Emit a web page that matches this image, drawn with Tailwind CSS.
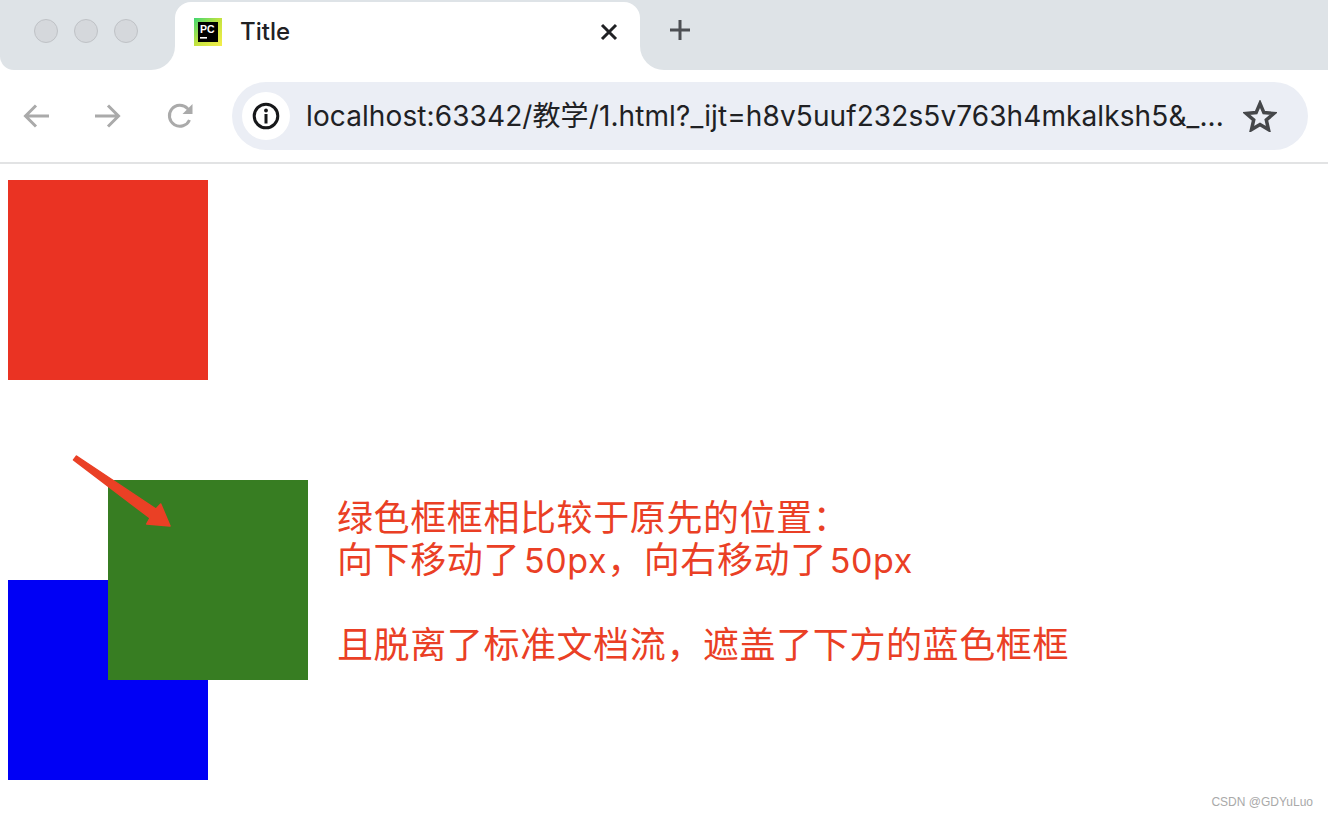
<!DOCTYPE html>
<html lang="zh-CN">
<head>
    <meta charset="UTF-8">
    <title>Title</title>
    <script src="https://cdn.jsdelivr.net/npm/@tailwindcss/browser@4"></script>
</head>
<body class="bg-white h-[816px] overflow-hidden relative font-['Inter','Noto_Sans_CJK_SC',sans-serif]">

    <!-- Tab strip -->
    <header class="flex h-[70px] bg-white">
        <div class="w-[175px] bg-[#dee3e7] rounded-br-[24px] rounded-bl-[14px] flex items-center gap-[16px] pl-[34px] pb-[8px]">
            <span class="w-[24px] h-[24px] rounded-full bg-[#d5d8dc] border border-[#bfc2c6]"></span>
            <span class="w-[24px] h-[24px] rounded-full bg-[#d5d8dc] border border-[#bfc2c6]"></span>
            <span class="w-[24px] h-[24px] rounded-full bg-[#d5d8dc] border border-[#bfc2c6]"></span>
        </div>
        <div class="w-[465px] bg-[#dee3e7] pt-[2px]">
            <div class="h-full bg-white rounded-t-[16px] flex items-center pl-[19px] pr-[22px] pb-[8px]">
                <svg width="28" height="28" viewBox="0 0 28 28" class="shrink-0">
                    <defs>
                        <linearGradient id="pc-frame" x1="0" y1="0" x2="1" y2="1">
                            <stop offset="0" stop-color="#3fd672"/>
                            <stop offset="0.5" stop-color="#c4e33f"/>
                            <stop offset="1" stop-color="#f5ee4a"/>
                        </linearGradient>
                    </defs>
                    <rect width="28" height="28" fill="url(#pc-frame)"/>
                    <rect x="4" y="4" width="20" height="20" fill="#000"/>
                    <text x="6" y="14.5" font-family="Liberation Sans" font-size="10.5" font-weight="700" fill="#fff">PC</text>
                    <rect x="6" y="19" width="7" height="1.6" fill="#fff"/>
                </svg>
                <span class="ml-[18px] text-[24px] font-medium text-[#202124]">Title</span>
                <svg width="18" height="18" viewBox="0 0 18 18" class="ml-auto" fill="none" stroke="#202124" stroke-width="3">
                    <path d="M2 2L16 16M16 2L2 16"/>
                </svg>
            </div>
        </div>
        <div class="flex-1 bg-[#dee3e7] rounded-bl-[24px] flex items-center pl-[30px] pb-[10px]">
            <svg width="20" height="20" viewBox="0 0 20 20" stroke="#4d5054" stroke-width="3" fill="none">
                <path d="M10 0V20M0 10H20"/>
            </svg>
        </div>
    </header>

    <!-- Toolbar -->
    <nav class="h-[94px] border-b-2 border-[#e2e3e4] flex items-center pl-[23px] pr-[20px]">
        <svg width="26" height="24" viewBox="0 0 26 24" fill="none" stroke="#aaaaaa" stroke-width="3">
            <path d="M26 12H2M13 1.500L2.500 12L13 22.500"/>
        </svg>
        <svg width="26" height="24" viewBox="0 0 26 24" fill="none" stroke="#aaaaaa" stroke-width="3" class="ml-[46px]">
            <path d="M0 12H24M13 1.500L23.500 12L13 22.500"/>
        </svg>
        <svg width="26" height="26" viewBox="0 0 26 26" fill="none" class="ml-[46px]">
            <path d="M22.500 17A10.500 10.500 0 1 1 20.500 5.500L24 9" stroke="#aaaaaa" stroke-width="3"/>
            <path d="M25.500 1V11H15.500Z" fill="#aaaaaa"/>
        </svg>
        <div class="ml-[39px] flex-1 h-[68px] rounded-full bg-[#ebeef5] flex items-center pl-[10px] pr-[31px]">
            <span class="w-[48px] h-[48px] rounded-full bg-white flex items-center justify-center shrink-0">
                <svg width="28" height="28" viewBox="0 0 28 28" fill="none">
                    <circle cx="14" cy="14" r="11.800" stroke="#17181a" stroke-width="3"/>
                    <circle cx="14" cy="8.500" r="1.900" fill="#17181a"/>
                    <rect x="12.500" y="12" width="3" height="9.500" fill="#17181a"/>
                </svg>
            </span>
            <span class="ml-[16px] text-[28px] tracking-[0.1px] text-[#202124] whitespace-nowrap">localhost:63342/教学/1.html?_ijt=h8v5uuf232s5v763h4mkalksh5&amp;_...</span>
            <svg width="34" height="32" viewBox="0 0 34 32" fill="none" stroke="#45474a" stroke-width="3.500" class="ml-auto shrink-0">
                <path d="M17 3.500L20.900 12.600L30.800 13.500L23.300 20L25.500 29.600L17 24.500L8.500 29.600L10.700 20L3.200 13.500L13.100 12.600Z"/>
            </svg>
        </div>
    </nav>

    <!-- Page content -->
    <main class="relative pl-[8px] pt-[16px]">
        <div class="w-[200px] h-[200px] bg-[#ea3323]"></div>
        <div class="w-[200px] h-[200px] mt-[200px] bg-[#0000f5]"></div>
        <div class="absolute left-[108px] top-[316px] w-[200px] h-[200px] bg-[#377d22]"></div>

        <svg class="absolute left-[70px] top-[288px]" width="106" height="78" viewBox="0 0 106 78">
            <path d="M6.500 4L86 57L90.700 52L100 74L76.700 72L80 66L3.500 8Z" fill="#ea4025" stroke="#ea4025" stroke-width="1.500" stroke-linejoin="round"/>
        </svg>

        <div class="absolute left-[337px] top-[333px] text-[36px] leading-[42px] tracking-[0.6px] text-[#ea3f25] whitespace-nowrap">
            <p>绿色框框相比较于原先的位置&#65306;</p>
            <p>向下移动了<span class="ml-[4px] text-[34px]">50px</span>&#65292;向右移动了<span class="ml-[3px] text-[34px]">50px</span></p>
            <p class="mt-[42px]">且脱离了标准文档流&#65292;遮盖了下方的蓝色框框</p>
        </div>
    </main>

    <span class="absolute right-[15px] top-[794px] text-[12px] leading-[16px] text-[#a9a9a9] font-['Liberation_Sans',sans-serif]">CSDN @GDYuLuo</span>
</body>
</html>
